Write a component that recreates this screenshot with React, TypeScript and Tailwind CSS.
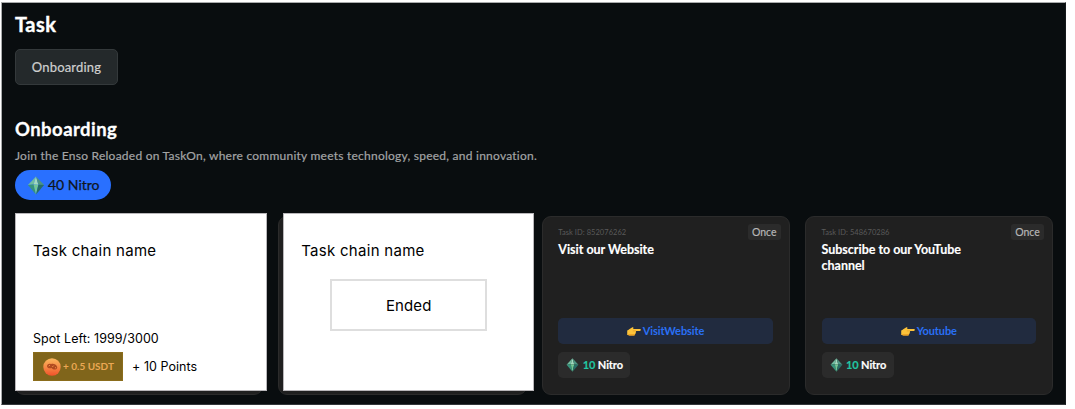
import type { ReactNode } from 'react'

function Gem({ className }: { className: string }) {
  return (
    <svg viewBox="0 0 18 20" className={className} aria-hidden="true">
      <path d="M9 0.5 L0.5 9.5 L6.5 9Z" fill="#6fbd9f" />
      <path d="M9 0.5 L6.5 9 L11.5 9.2Z" fill="#a3d9c0" />
      <path d="M9 0.5 L11.5 9.2 L17.5 9.5Z" fill="#4c9482" />
      <path d="M0.5 9.5 L6.5 9 L9 19.5Z" fill="#37937c" />
      <path d="M6.5 9 L11.5 9.2 L9 19.5Z" fill="#72c795" />
      <path d="M11.5 9.2 L17.5 9.5 L9 19.5Z" fill="#276d67" />
    </svg>
  )
}

function PointingHand() {
  return (
    <svg viewBox="0 0 14 9" className="h-[9px] w-[14px] shrink-0" aria-hidden="true">
      <path d="M0.2 3.6 C1.5 3 3.6 1.2 5 .5 C6 0 6.7 .5 6.5 1.2 L6 2.1 H12.8 C14.2 2.1 14.2 3.9 12.8 3.9 H8.8 C9.3 4.5 9.2 5.2 8.7 5.5 C9 6.2 8.7 6.8 8.1 7 C8.2 7.9 7.5 8.5 6.5 8.5 H3.2 C2 8.5 1.4 8 .2 8Z" fill="#fcc23a" />
      <path d="M.2 8 C1.4 8 2 8.5 3.2 8.5 H6.5 C7.5 8.5 8.2 7.9 8.1 7 L5.5 7.2 H2Z" fill="#e89a20" />
      <path d="M5.8 3.9 H9" stroke="#d98a1b" strokeWidth=".5" />
    </svg>
  )
}

function Coin() {
  return (
    <svg viewBox="0 0 18 18" className="h-[18px] w-[18px] shrink-0" aria-hidden="true">
      <defs>
        <linearGradient id="coin" x1="0" y1="0" x2="0" y2="1">
          <stop offset="0" stopColor="#fbb85e" />
          <stop offset="0.5" stopColor="#f58a45" />
          <stop offset="1" stopColor="#f0512a" />
        </linearGradient>
      </defs>
      <circle cx="9" cy="9" r="8.7" fill="url(#coin)" />
      <path d="M4 8 C4.3 6.3 6.5 5.2 8 6.2 C10 5.2 13.3 6.5 14.2 9 C14.4 10.8 13 12 11.4 11.4 C10 11.8 9.4 10.8 8.5 10 C6.5 10.8 4 10 4 8Z" fill="#b04a20" />
      <path d="M5.7 8 L7 7.2 M9.3 9 L10.6 7.6 M12 10.2 L13 9.3" stroke="#f09a48" strokeWidth=".9" />
    </svg>
  )
}

function TaskCard({ id, title, action }: { id: string; title: string; action: ReactNode }) {
  return (
    <article className="flex h-[179px] flex-col rounded-[9px] border border-[#2b2b2b] bg-[#202020] pr-[8px] pl-[15.8px]">
      <div className="mt-[7px] flex h-4 items-center justify-between">
        <span className="pt-px text-[7.5px] tracking-[0.05px] text-[#5a5a5a]">Task ID: {id}</span>
        <span className="flex h-4 w-[33px] items-center justify-center rounded-[3px] bg-[#2b2b2b] pt-px text-[10.5px] text-[#b8b8b8] [-webkit-text-stroke:0.15px_#b8b8b8]">Once</span>
      </div>
      <h3 className="mt-[2px] h-[76px] w-[160px] text-[12.5px] leading-[15.5px] font-bold tracking-[-0.02px] text-white [-webkit-text-stroke:0.15px_white]">{title}</h3>
      <div className="mr-[8px] flex h-[26px] shrink-0 items-center justify-center gap-[2px] rounded-[5px] bg-[#212b3f] text-[11px] font-bold tracking-[-0.08px] text-[#2970f5]">
        <PointingHand />
        <span>{action}</span>
      </div>
      <div className="mt-2 flex h-[26px] w-[72px] items-center rounded-[5px] bg-[#2b2b2b] pl-[8px] text-[11px] font-bold tracking-[-0.1px] text-white [-webkit-text-stroke:0.15px]">
        <Gem className="h-[14px] w-[13px]" />
        <span className="ml-[3.5px] text-[#21c6a3]">10</span>
        <span className="ml-[2.5px]">Nitro</span>
      </div>
    </article>
  )
}

function ChainCard({ children, className }: { children: ReactNode; className: string }) {
  return (
    <div className="relative h-[179px] rounded-[9px] border border-[#2b2b2b] bg-[#202020]">
      <section className={`absolute -top-[4px] flex h-[178px] flex-col border border-[#b9b7ba] bg-white px-[17px] font-[Inter,sans-serif] text-black ${className}`}>
        <h3 className="mt-[26px] text-[15px] leading-[22px] tracking-[0.28px]">Task chain name</h3>
        {children}
      </section>
    </div>
  )
}

export default function App() {
  return (
    <div className="h-[409px] w-[1075px] overflow-hidden bg-white pt-[2px] pl-[1px] font-[Lato,sans-serif] whitespace-nowrap">
      <main className="h-[403px] w-[1065px] border border-t-[#a9abac] border-r-[#15191b] border-b-[#33373a] border-l-[#a9abac] bg-[#090d0f] pr-[12px] pl-[13px]">
        <h1 className="pt-[9px] text-[20px] leading-[25px] font-bold tracking-[0.5px] text-white [-webkit-text-stroke:0.4px_white]">Task</h1>
        <button className="mt-[12px] flex h-9 w-[103px] items-center justify-center rounded-[5px] border border-[#34393b] bg-[#24292b] pt-px text-[13px] tracking-[0.2px] text-[#cfcfcf] [-webkit-text-stroke:0.2px_#cfcfcf]">Onboarding</button>
        <h2 className="mt-[32px] text-[18.5px] leading-[24px] font-bold tracking-[0.45px] text-white [-webkit-text-stroke:0.3px_white]">Onboarding</h2>
        <p className="mt-[6px] text-[12px] leading-[18px] tracking-[0.24px] text-[#a3a4a5] [-webkit-text-stroke:0.2px_#a3a4a5]">Join the Enso Reloaded on TaskOn, where community meets technology, speed, and innovation.</p>
        <div className="mt-[5px] flex h-[30px] w-[96px] items-center rounded-full bg-[#2970ff] pl-[12px] text-[14px] text-[#10151c] [-webkit-text-stroke:0.25px_#10151c]">
          <Gem className="h-[19px] w-[18px]" />
          <span className="ml-[3px] pb-px">40 Nitro</span>
        </div>
        <div className="mt-[16px] grid grid-cols-4 gap-[15px] whitespace-normal">
          <ChainCard className="-left-px w-[252px]">
            <p className="mt-[68px] text-[12.5px] leading-[18px] tracking-[0.05px]">Spot Left: 1999/3000</p>
            <div className="mt-[4px] flex items-center gap-[9px]">
              <div className="flex h-[29px] w-[90px] items-center gap-[2px] border border-[#8b6d1c] bg-[#80651b] pl-[9px] font-[Lato,sans-serif] text-[10px] font-bold whitespace-nowrap text-[#eba854]">
                <Coin />
                <span className="pb-px">+ 0.5 USDT</span>
              </div>
              <span className="pt-[2px] text-[12.5px] tracking-[0.05px]">+ 10 Points</span>
            </div>
          </ChainCard>
          <ChainCard className="left-[4px] w-[251px]">
            <div className="mt-[17px] ml-[29px] flex h-[52px] w-[157px] items-center justify-center border-2 border-[#dedede] pt-[2px] text-[15px] tracking-[0.1px]">Ended</div>
          </ChainCard>
          <TaskCard id="852076262" title="Visit our Website" action="VisitWebsite" />
          <TaskCard id="548670286" title="Subscribe to our YouTube channel" action="Youtube" />
        </div>
      </main>
    </div>
  )
}
